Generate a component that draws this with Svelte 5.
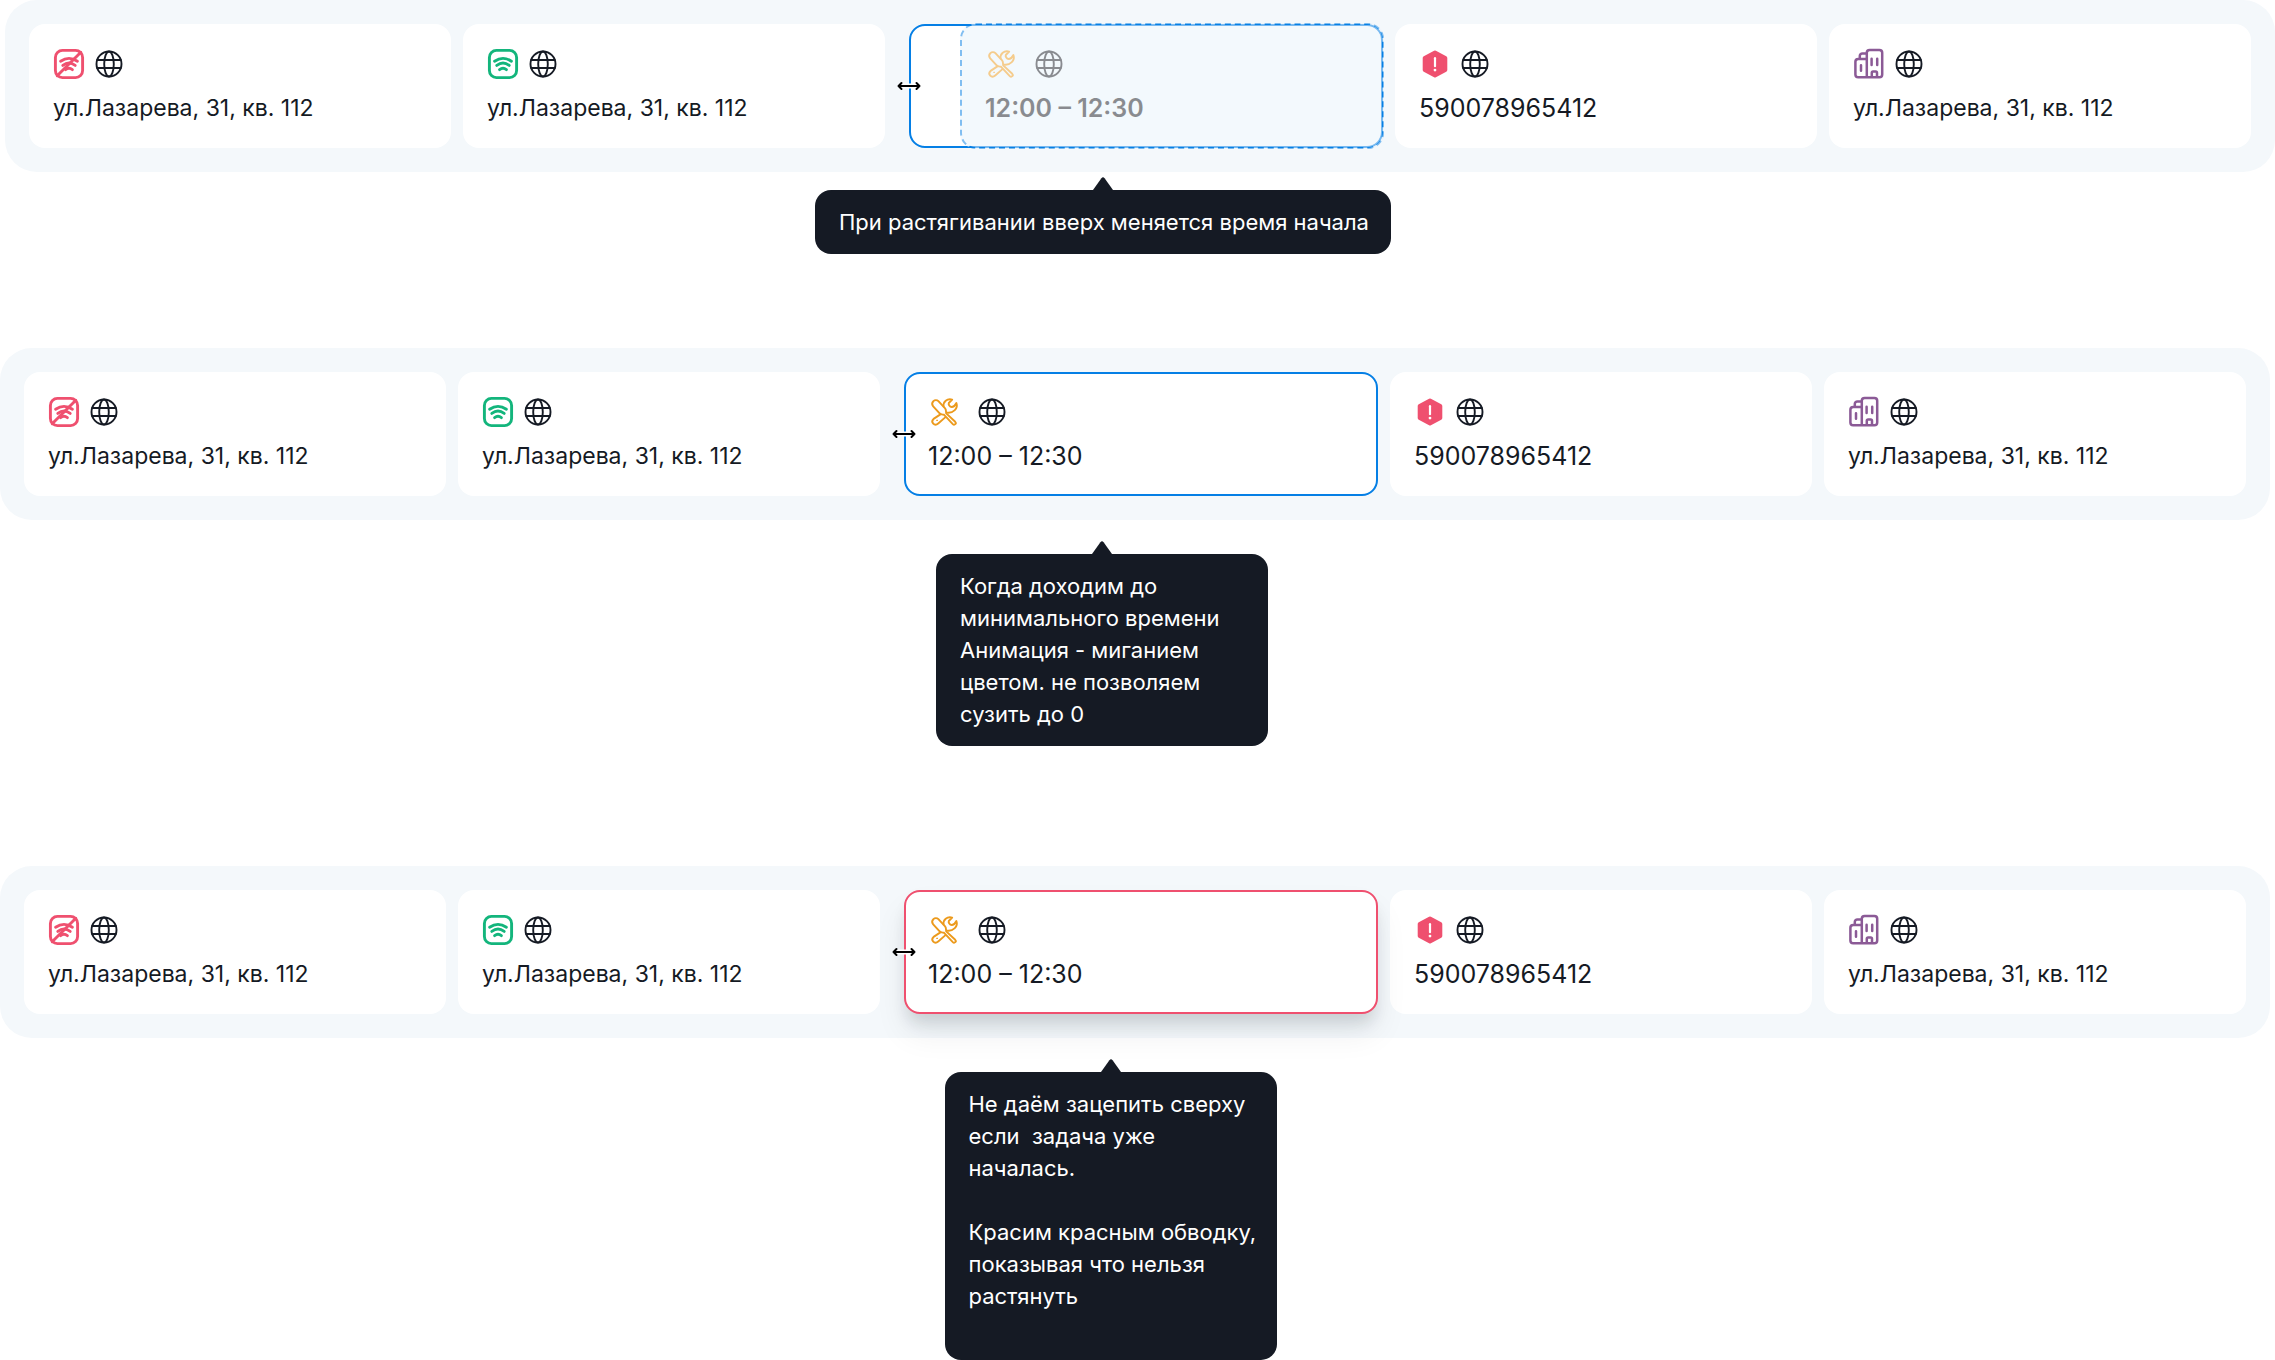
<script lang="ts">
	type IconName = 'wifiOff' | 'wifi' | 'tools' | 'alert' | 'building';

	interface Task {
		id: number;
		icon: IconName;
		title: string;
		numeric?: boolean;
		resizable?: boolean;
	}

	interface Example {
		id: string;
		state: 'stretch' | 'min' | 'locked';
		lines: string[];
	}

	const tasks: Task[] = [
		{ id: 1, icon: 'wifiOff', title: 'ул.Лазарева, 31, кв. 112' },
		{ id: 2, icon: 'wifi', title: 'ул.Лазарева, 31, кв. 112' },
		{
			id: 3,
			icon: 'tools',
			title: '12:00 – 12:30',
			numeric: true,
			resizable: true,
		},
		{ id: 4, icon: 'alert', title: '590078965412', numeric: true },
		{ id: 5, icon: 'building', title: 'ул.Лазарева, 31, кв. 112' },
	];

	const examples: Example[] = [
		{
			id: 'start-time',
			state: 'stretch',
			lines: ['При растягивании вверх меняется время начала'],
		},
		{
			id: 'min-time',
			state: 'min',
			lines: [
				'Когда доходим до',
				'минимального времени',
				'Анимация - миганием',
				'цветом. не позволяем',
				'сузить до 0',
			],
		},
		{
			id: 'started',
			state: 'locked',
			lines: [
				'Не даём зацепить сверху',
				'если  задача уже',
				'началась.',
				'',
				'Красим красным обводку,',
				'показывая что нельзя',
				'растянуть',
				'',
			],
		},
	];
</script>

<style>
	:global(body) {
		margin: 0;
		background: #ffffff;
	}

	.page {
		color: #151a24;
		font-family: Inter, 'Noto Sans', sans-serif;
		font-size: 22px;
		line-height: 32px;
	}

	.timeline {
		display: grid;
		grid-template-columns: 422fr 422fr 486fr 422fr 422fr;
		gap: 12px;
		margin-right: 5px;
		padding: 24px;
		border-radius: 32px;
		background: #f4f8fb;
	}
	.stretch .timeline {
		margin-right: 0;
		margin-left: 5px;
	}

	.card {
		display: flex;
		flex-direction: column;
		gap: 12px;
		box-sizing: border-box;
		padding: 24px;
		border-radius: 16px;
		background: #ffffff;
		white-space: nowrap;
	}

	.title {
		font-size: 23px;
	}
	.numeric {
		font-size: 25px;
	}

	.icons {
		display: flex;
		gap: 8px;
	}
	.icons svg {
		width: 32px;
		height: 32px;
		fill: none;
		stroke: currentColor;
		stroke-linecap: round;
		stroke-linejoin: round;
	}
	.wifiOff,
	.alert {
		color: #ef506f;
	}
	.wifi {
		color: #13b57c;
	}
	.tools {
		color: #ec9a1c;
	}
	.building {
		color: #8b5a96;
	}

	.slot {
		position: relative;
		margin-left: 12px;
	}
	.slot .icons {
		gap: 16px;
	}
	.active {
		padding: 22px;
		border: 2px solid #057fe5;
	}
	.stretch .active {
		padding: 0 0 0 52px;
	}
	.locked .active {
		border-color: #ef506f;
		box-shadow:
			0 12px 16px -4px rgba(21, 26, 36, 0.14),
			0 20px 32px rgba(21, 26, 36, 0.07);
	}

	/* previous bounds of the task while its edge is being dragged */
	.ghost {
		margin: -3px;
		padding: 23px;
		border: 2px dashed #057fe5;
		background: #e9f4fc;
		font-weight: 600;
		opacity: 0.5;
	}

	.handle {
		position: absolute;
		top: 50%;
		left: 0;
		display: flex;
		padding: 0;
		border: 0;
		background: none;
		cursor: ew-resize;
		transform: translate(-50%, -50%);
	}

	.note {
		position: relative;
		display: flex;
		justify-content: center;
		padding: 34px 71px 120px 0;
	}
	.stretch .note {
		padding: 18px 69px 94px 0;
	}
	.locked .note {
		padding: 34px 54px 0 0;
	}
	.tooltip {
		position: relative;
		box-sizing: border-box;
		width: 332px;
		padding: 16px 24px;
		border-radius: 16px;
		background: #151a24;
		color: #ffffff;
	}
	.stretch .tooltip {
		width: 576px;
	}
	.tooltip p {
		min-height: 32px;
		margin: 0;
		white-space: pre;
	}
	.arrow {
		position: absolute;
		bottom: 100%;
		left: 50%;
		margin-left: -10px;
		fill: #151a24;
	}
</style>

{#snippet taskIcon(name: IconName)}
	<svg class={name} viewBox="0 0 32 32" aria-hidden="true">
		{#if name === 'wifi' || name === 'wifiOff'}
			<g stroke-width="2.9">
				<rect x="2.4" y="2.4" width="27.2" height="27.2" rx="7" />
				<path d="M7.6 13.2Q16 7.6 24.4 13.2M9.8 17.4Q16 12.8 22.2 17.4M12.6 21.6Q16 19 19.4 21.6" />
				{#if name === 'wifiOff'}
					<path d="M4.2 27.8 27.8 4.2" />
				{/if}
			</g>
		{:else if name === 'tools'}
			<g stroke-width="1.9">
				<path d="M11.4 17.2 5.2 10.4C3.9 8.8 4 6.6 5.4 5.2s3.6-1.4 5 0l6.7 7.2c1.2 1.4.8 3.1 1.1 5l9 8.4c.9.9.8 1.7.1 2.4s-1.7.7-2.5-.1l-8.7-9.3c-1.9-.3-3.3.1-4.7-1.6z" />
				<path d="M12.4 18.4 5.6 22.9C4 24.5 4 26.4 5.2 27.6s3.4 1.3 5-.1l7-6.1" />
				<path d="M15.6 10.4C15 5.8 19 2.2 24.2 3.6L20.8 7c-.6 1.5.8 4 3 4 1.6 0 3.4-1.7 4.6-4 2 5.6-3.2 10.4-9.2 9.6" />
				<circle cx="9" cy="24.3" r=".3" stroke-width="1" />
			</g>
		{:else if name === 'alert'}
			<path
				d="M16 4.6 26.3 10v12L16 27.4 5.7 22V10z"
				fill="currentColor"
				stroke-width="4" />
			<path d="M16 10.2v8" stroke="#fff" stroke-width="2.2" />
			<circle cx="16" cy="22.1" r="1.4" fill="#fff" stroke="none" />
		{:else}
			<g stroke-width="2.5">
				<path d="M13.8 29.2V4.8a2.8 2.8 0 0 1 2.8-2.8h9.8a2.8 2.8 0 0 1 2.8 2.8v21.6a2.8 2.8 0 0 1-2.8 2.8H5.2a2.8 2.8 0 0 1-2.8-2.8V13.8a2.8 2.8 0 0 1 2.8-2.8h8.2M6.8 10.6V8a2.6 2.6 0 0 1 2.6-2.6h4" />
				<path d="M8 17.3v5.4M18.6 10.7v6.3M24.2 10.7v6.3M18.8 28.8v-4a1.3 1.3 0 0 1 1.3-1.3h2.6a1.3 1.3 0 0 1 1.3 1.3v4" />
			</g>
		{/if}
	</svg>
{/snippet}

{#snippet taskContent(task: Task)}
	<div class="icons">
		{@render taskIcon(task.icon)}
		<svg viewBox="0 0 32 32" stroke-width="1.9" aria-hidden="true">
			<circle cx="16" cy="16" r="12.5" />
			<ellipse cx="16" cy="16" rx="4.8" ry="12.5" />
			<path d="M4.2 12h23.6M4.2 20h23.6" />
		</svg>
	</div>
	<div class="title" class:numeric={task.numeric}>{task.title}</div>
{/snippet}

<main class="page">
	{#each examples as example (example.id)}
		<section class={example.state}>
			<div class="timeline">
				{#each tasks as task (task.id)}
					{#if task.resizable}
						<div class="slot">
							<div class="card active">
								{#if example.state === 'stretch'}
									<div class="card ghost">
										{@render taskContent(task)}
									</div>
								{:else}
									{@render taskContent(task)}
								{/if}
							</div>
							<button class="handle" type="button" aria-label="Время начала">
								<svg width="24" height="10" viewBox="0 0 24 10" fill="none">
									<path d="M3 5h18" stroke="#fff" stroke-width="5" />
									<path
										d="M1.5 5h21M4.5 2l-3 3 3 3M19.5 2l3 3-3 3"
										stroke="#000"
										stroke-width="2"
										stroke-linecap="round"
										stroke-linejoin="round" />
								</svg>
							</button>
						</div>
					{:else}
						<div class="card">
							{@render taskContent(task)}
						</div>
					{/if}
				{/each}
			</div>

			<div class="note">
				<div class="tooltip" role="tooltip">
					<svg class="arrow" width="20" height="13" viewBox="0 0 20 13">
						<path d="M0 13 8.4 1.2Q10-.8 11.6 1.2L20 13z" />
					</svg>
					{#each example.lines as line}
						<p>{line}</p>
					{/each}
				</div>
			</div>
		</section>
	{/each}
</main>
